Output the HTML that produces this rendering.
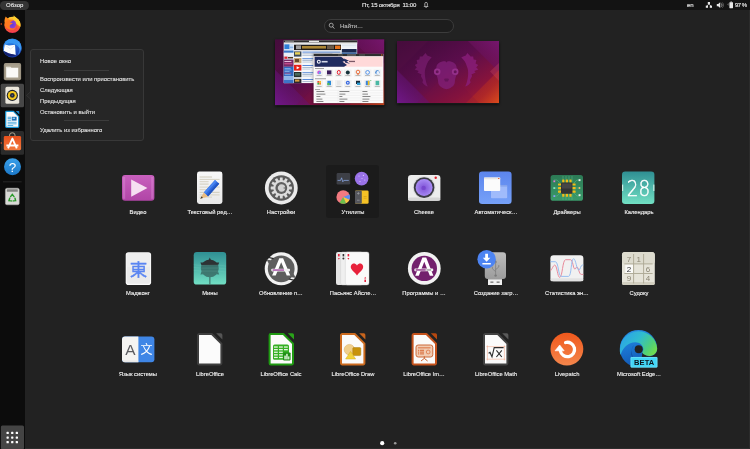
<!DOCTYPE html>
<html lang="ru">
<head>
<meta charset="utf-8">
<title>Обзор</title>
<style>
html,body{margin:0;padding:0;}
body{width:750px;height:449px;overflow:hidden;background:#222222;position:relative;font-family:"Liberation Sans","DejaVu Sans",sans-serif;color:#e6e6e6;}
.abs{position:absolute;}
.t,.mi,.lbl,.ph{will-change:transform;}
#topbar{position:absolute;left:0;top:0;width:750px;height:10px;background:#131313;}
#topbar .t{position:absolute;top:0;height:10px;line-height:10px;font-size:6px;color:#e2e2e2;white-space:nowrap;-webkit-text-stroke:0.15px #e2e2e2;}
#obzor{position:absolute;left:0;top:1px;width:29px;height:8.5px;border-radius:5px;background:#353535;}
#dock{position:absolute;left:0;top:10px;width:25px;height:439px;background:#0c0c0c;}
#search{position:absolute;left:323.8px;top:19.2px;width:128.6px;height:11.8px;border:0.8px solid #3c3c3c;border-radius:7px;background:#1d1d1d;}
#search .ph{position:absolute;left:15px;top:0;height:12px;line-height:12.2px;font-size:6px;color:#c2c2c2;-webkit-text-stroke:0.08px #c2c2c2;}
#menu{position:absolute;left:30px;top:49px;width:112.4px;height:90.2px;border:0.8px solid #383838;border-radius:3px;background:#262626;}
#menu .mi{position:absolute;left:9px;font-size:5.85px;line-height:8px;height:8px;color:#e8e8e8;white-space:nowrap;-webkit-text-stroke:0.08px #e8e8e8;}
#menu .sep{position:absolute;left:33.2px;width:45px;height:0.8px;background:#3c3c3c;}
.lbl{z-index:5;position:absolute;width:70px;text-align:center;font-size:5.78px;line-height:8px;height:8px;color:#f4f4f4;white-space:nowrap;-webkit-text-stroke:0.12px #f4f4f4;}
svg{position:absolute;overflow:visible;}
</style>
</head>
<body>

<!-- ===== top bar ===== -->
<div id="topbar">
  <div id="obzor"></div>
  <div class="t" style="left:6px;">Обзор</div>
  <div class="t" style="left:361.5px;letter-spacing:-0.18px;">Пт, 15 октября&nbsp; 11:00</div>
  <div class="t" style="left:686.6px;">en</div>
  <div class="t" style="left:735.4px;letter-spacing:-0.5px;">97 %</div>
</div>

<!-- ===== dock ===== -->
<div id="dock"></div>




<div style="position:absolute;left:25px;top:447.5px;width:725px;height:1.5px;background:#2d2d2d;"></div>
<div style="position:absolute;left:749px;top:10px;width:1px;height:439px;background:#2b2b2b;"></div>

<!-- ===== search ===== -->
<div id="search"><div class="ph">Найти…</div></div>

<!-- ===== context menu ===== -->
<div id="menu">
  <div class="mi" style="top:7.1px;">Новое окно</div>
  <div class="sep" style="top:19.5px;"></div>
  <div class="mi" style="top:24.9px;">Воспроизвести или приостановить</div>
  <div class="mi" style="top:36.1px;">Следующая</div>
  <div class="mi" style="top:47.1px;">Предыдущая</div>
  <div class="mi" style="top:58.3px;">Остановить и выйти</div>
  <div class="sep" style="top:70.3px;"></div>
  <div class="mi" style="top:76.1px;">Удалить из избранного</div>
</div>

<!-- ===== labels ===== -->
<div class="lbl" style="left:103px;top:208px;">Видео</div>
<div class="lbl" style="left:174.5px;top:208px;">Текстовый ред…</div>
<div class="lbl" style="left:246px;top:208px;">Настройки</div>
<div class="lbl" style="left:317.5px;top:208px;">Утилиты</div>
<div class="lbl" style="left:389px;top:208px;">Cheese</div>
<div class="lbl" style="left:460.5px;top:208px;">Автоматическ…</div>
<div class="lbl" style="left:532px;top:208px;">Драйверы</div>
<div class="lbl" style="left:603.5px;top:208px;">Календарь</div>

<div class="lbl" style="left:103px;top:289px;">Маджонг</div>
<div class="lbl" style="left:174.5px;top:289px;">Мины</div>
<div class="lbl" style="left:246px;top:289px;">Обновление п…</div>
<div class="lbl" style="left:317.5px;top:289px;">Пасьянс Айсле…</div>
<div class="lbl" style="left:389px;top:289px;">Программы и …</div>
<div class="lbl" style="left:460.5px;top:289px;">Создание загр…</div>
<div class="lbl" style="left:532px;top:289px;">Статистика эн…</div>
<div class="lbl" style="left:603.5px;top:289px;">Судоку</div>

<div class="lbl" style="left:103px;top:369.5px;">Язык системы</div>
<div class="lbl" style="left:174.5px;top:369.5px;">LibreOffice</div>
<div class="lbl" style="left:246px;top:369.5px;">LibreOffice Calc</div>
<div class="lbl" style="left:317.5px;top:369.5px;">LibreOffice Draw</div>
<div class="lbl" style="left:389px;top:369.5px;">LibreOffice Im…</div>
<div class="lbl" style="left:460.5px;top:369.5px;">LibreOffice Math</div>
<div class="lbl" style="left:532px;top:369.5px;">Livepatch</div>
<div class="lbl" style="left:603.5px;top:369.5px;">Microsoft Edge…</div>



<!-- ===== workspace thumbnails ===== -->
<svg id="thumbs" width="750" height="449" viewBox="0 0 750 449" style="left:0;top:0;">
  <defs>
    <linearGradient id="gWall" x1="0" y1="0" x2="1" y2="1"><stop offset="0" stop-color="#3c0a37"/><stop offset="0.45" stop-color="#5a0d4b"/><stop offset="0.75" stop-color="#86133c"/><stop offset="1" stop-color="#b4222a"/></linearGradient>
    <linearGradient id="gBL" x1="0" y1="1" x2="1" y2="0"><stop offset="0" stop-color="#70188a"/><stop offset="0.4" stop-color="#621472" stop-opacity="0.7"/><stop offset="1" stop-color="#5a1068" stop-opacity="0"/></linearGradient>
    <linearGradient id="gBR" x1="1" y1="1" x2="0" y2="0"><stop offset="0" stop-color="#dc4c1c"/><stop offset="0.35" stop-color="#b42c24" stop-opacity="0.75"/><stop offset="1" stop-color="#a82028" stop-opacity="0"/></linearGradient>
    <linearGradient id="gTR" x1="1" y1="0" x2="0" y2="1"><stop offset="0" stop-color="#76166e"/><stop offset="0.5" stop-color="#6a125c" stop-opacity="0.65"/><stop offset="1" stop-color="#70145f" stop-opacity="0"/></linearGradient>
    <g id="wp">
      <rect x="0" y="0" width="102" height="62" fill="url(#gWall)"/>
      <path d="M0 0 H31 L0 31 Z" fill="#551246" opacity="0.35"/>
      <path d="M0 29 L33 62 H0 Z" fill="url(#gBL)"/>
      <path d="M71 0 H102 V31 Z" fill="url(#gTR)"/>
      <path d="M102 29 V62 H69 Z" fill="url(#gBR)"/>
      <path d="M102 22 L93 30.500 L102 40 Z" fill="#d0506a" opacity="0.300"/>
      <path d="M20 62 L51 31 L82 62 Z" fill="#7a1244" opacity="0.180"/>
    </g>
    <filter id="sh" x="-10%" y="-10%" width="120%" height="125%"><feGaussianBlur stdDeviation="1.6"/></filter>
    <clipPath id="c1"><rect x="275" y="39" width="109.400" height="66"/></clipPath>
    <clipPath id="c2"><rect x="397" y="41" width="102" height="62"/></clipPath>
  </defs>
  <!-- shadows -->
  <rect x="275" y="40.500" width="109.400" height="66" fill="#0c0c0c" opacity="0.75" filter="url(#sh)"/>
  <rect x="397" y="42.500" width="102" height="62" fill="#0c0c0c" opacity="0.75" filter="url(#sh)"/>

  <!-- workspace 1 -->
  <g clip-path="url(#c1)">
    <use href="#wp" transform="translate(275 39) scale(1.0725 1.0645)"/>
    <rect x="275" y="39" width="109.400" height="0.500" fill="#1a1a1a" opacity="0.600"/>
    <!-- browser window -->
    <rect x="283.800" y="40.300" width="73.400" height="42.800" fill="#f6f8fb"/>
    <rect x="283.800" y="40.300" width="73.400" height="2.300" fill="#2b2b2b"/>
    <rect x="285" y="40.700" width="9" height="1.300" fill="#7a7a7a"/><rect x="309" y="40.700" width="10" height="1.300" fill="#e8e8e8"/>
    <rect x="283.800" y="42.600" width="73.400" height="1.300" fill="#e6e6e6"/>
    <rect x="283.800" y="43.900" width="9.700" height="39.200" fill="#cfe0f4"/>
    <rect x="284.400" y="44.400" width="5" height="4.600" fill="#2f7fd8"/><rect x="289.600" y="46.600" width="3.600" height="1.600" fill="#8ab4e6"/>
    <rect x="283.800" y="50.600" width="9.700" height="2" fill="#3b78c8"/>
    <rect x="283.800" y="53" width="9.700" height="3.400" fill="#e9eef6"/>
    <rect x="284.400" y="56.600" width="3" height="2.200" fill="#e0242c"/><rect x="288" y="57" width="5" height="1.400" fill="#55381c"/>
    <rect x="283.800" y="59.600" width="9.700" height="7.200" fill="#7a2a66"/>
    <rect x="284.400" y="61" width="7" height="1" fill="#e6b8da"/><rect x="284.400" y="63" width="8" height="1.400" fill="#c24a8a"/>
    <rect x="283.800" y="66.800" width="9.700" height="9.400" fill="#2f68c0"/>
    <rect x="284.600" y="68" width="6" height="0.700" fill="#9cc0f0"/><rect x="284.600" y="69.600" width="7" height="0.700" fill="#9cc0f0"/><rect x="284.600" y="71.200" width="5" height="0.700" fill="#9cc0f0"/><rect x="284.600" y="72.800" width="6.600" height="0.700" fill="#d05a80"/><rect x="284.600" y="74.400" width="6" height="0.700" fill="#9cc0f0"/>
    <rect x="283.800" y="76.200" width="9.700" height="3.800" fill="#8fb6e8"/><rect x="283.800" y="80" width="9.700" height="3.100" fill="#3d74c8"/>
    <rect x="294" y="44.700" width="47" height="5.400" fill="#1d1a18"/>
    <rect x="296" y="45.400" width="5" height="3.800" fill="#d8d8d8" opacity="0.7"/><rect x="302" y="46" width="24" height="2.600" fill="#c49a3a" opacity="0.85"/><rect x="327" y="45.400" width="7" height="3.800" fill="#6a5a48"/><rect x="335" y="45.600" width="5.400" height="3.400" fill="#e8741c"/>
    <rect x="341.800" y="44.400" width="14.800" height="2" fill="#dfe6f0"/><rect x="341.800" y="47" width="14.800" height="1.600" fill="#eef2f8"/><rect x="341.800" y="49" width="14.800" height="3.600" fill="#1c2a50"/>
    <rect x="341.800" y="52.600" width="14.800" height="1.400" fill="#3b78c8"/>
    <!-- rows -->
    <rect x="294" y="51.400" width="7.400" height="5.200" fill="#3a4a5a"/><rect x="295" y="52.200" width="5" height="2.400" fill="#e8d25a"/>
    <rect x="302.400" y="51.600" width="38" height="1" fill="#5a8ad8"/><rect x="302.400" y="53.400" width="30" height="0.900" fill="#a9b8cc"/><rect x="302.400" y="55" width="34" height="0.900" fill="#b9c6d8"/>
    <rect x="294" y="58" width="7.400" height="5.200" fill="#c8a878"/><rect x="295" y="59" width="4" height="3" fill="#6a4a2a"/>
    <rect x="302.400" y="58.200" width="11" height="1" fill="#5a8ad8"/><rect x="302.400" y="60" width="10" height="0.900" fill="#a9b8cc"/><rect x="302.400" y="61.600" width="9" height="0.900" fill="#b9c6d8"/>
    <rect x="294" y="64.800" width="7.400" height="5.800" fill="#e62117"/><path d="M296.600 66.200 l3 1.500 l-3 1.500 Z" fill="#ffffff"/>
    <rect x="302.400" y="65" width="11" height="1" fill="#5a8ad8"/><rect x="302.400" y="67" width="10" height="0.900" fill="#a9b8cc"/><rect x="302.400" y="68.600" width="8" height="0.900" fill="#b9c6d8"/>
    <rect x="294" y="72" width="7.400" height="5.200" fill="#26302e"/><rect x="295" y="73" width="5" height="2.600" fill="#4a6a5a"/>
    <rect x="302.400" y="72.200" width="11" height="1" fill="#5a8ad8"/><rect x="302.400" y="74" width="10" height="0.900" fill="#a9b8cc"/><rect x="302.400" y="75.600" width="9" height="0.900" fill="#b9c6d8"/>
    <rect x="294" y="78.800" width="7.400" height="4.300" fill="#2a2a30"/><rect x="295" y="79.600" width="4.400" height="2" fill="#d8a040"/>
    <rect x="302.400" y="79" width="11" height="1" fill="#5a8ad8"/><rect x="302.400" y="81" width="10" height="0.900" fill="#a9b8cc"/>

    <!-- software window -->
    <rect x="312.800" y="53.600" width="72" height="50.400" fill="#0c0c0c" opacity="0.350" filter="url(#sh)"/>
    <rect x="313.600" y="53.900" width="69.800" height="49.200" fill="#fbfbfb"/>
    <rect x="313.600" y="53.900" width="69.800" height="2.300" fill="#2e2e2e"/>
    <rect x="338" y="54.400" width="5" height="1.200" fill="#555555"/><rect x="347" y="54.400" width="9" height="1.200" fill="#777777"/><rect x="359" y="54.400" width="6" height="1.200" fill="#555555"/>
    <circle cx="381.800" cy="55" r="0.700" fill="#e8642c"/>
    <rect x="314.600" y="56.700" width="68" height="10" fill="#ffd9d9"/>
    <path d="M314.600 56.700 H341 L346 60.600 L342.500 61.800 L347 65 L344 66.700 H314.600 Z" fill="#1f2b5e"/>
    <circle cx="318.800" cy="61.700" r="2" fill="#f2f4fa"/><circle cx="318.800" cy="61.700" r="0.900" fill="#1f2b5e"/>
    <rect x="321.600" y="60.900" width="6" height="1.600" fill="#e8ecf6" opacity="0.9"/>
    <path d="M344 58.600 l5 2.200 l-2.600 0.600 l3.600 2.400 l-5 -1.200 Z" fill="#1f2b5e"/>
    <rect x="349" y="60.800" width="6" height="1.300" fill="#5a3a4a" opacity="0.8"/>
    <rect x="315" y="68.200" width="9" height="0.800" fill="#8a8a8a"/>
    <!-- icons row 1 -->
    <rect x="315.400" y="69.600" width="7.600" height="7.200" fill="#f1f1f1"/><circle cx="319.200" cy="72.400" r="1.900" fill="#c05ae0"/><circle cx="319.800" cy="73" r="1" fill="#4ac0e8"/>
    <rect x="325.400" y="69.600" width="7.600" height="7.200" fill="#f1f1f1"/><rect x="327" y="70.400" width="4.400" height="4" fill="#3a1c5a"/>
    <rect x="335" y="69.600" width="7.600" height="7.200" fill="#f1f1f1"/><ellipse cx="338.800" cy="72.400" rx="1.500" ry="2" fill="none" stroke="#e81c2c" stroke-width="1"/>
    <rect x="344" y="69.600" width="7.600" height="7.200" fill="#f1f1f1"/><circle cx="347.800" cy="72.400" r="2" fill="#16323a"/>
    <rect x="354.200" y="69.600" width="7.600" height="7.200" fill="#f1f1f1"/><circle cx="358" cy="72" r="1.800" fill="none" stroke="#e8642c" stroke-width="0.900"/><rect x="357.500" y="73.600" width="1" height="1.600" fill="#e8642c"/>
    <rect x="363.800" y="69.600" width="7.600" height="7.200" fill="#f1f1f1"/><circle cx="367.600" cy="72.400" r="1.900" fill="none" stroke="#3a84e8" stroke-width="0.800"/>
    <rect x="373.600" y="69.600" width="7.600" height="7.200" fill="#f1f1f1"/><circle cx="377.400" cy="72.400" r="2.100" fill="#2a78d0"/><path d="M376.400 72.400 a1.400 1.400 0 0 1 2.800 0 v2 h-2.800 Z" fill="#e8f0fa"/>
    <g fill="#9a9a9a"><rect x="316.600" y="75.400" width="5" height="0.600"/><rect x="326.600" y="75.400" width="5" height="0.600"/><rect x="336.200" y="75.400" width="5" height="0.600"/><rect x="345.200" y="75.400" width="5" height="0.600"/><rect x="355.400" y="75.400" width="5" height="0.600"/><rect x="365" y="75.400" width="5" height="0.600"/><rect x="374.800" y="75.400" width="5" height="0.600"/></g>
    <rect x="315" y="78.400" width="11" height="0.800" fill="#8a8a8a"/>
    <!-- icons row 2 -->
    <rect x="315.400" y="80" width="7.600" height="7.600" fill="#f1f1f1"/><rect x="317.400" y="81" width="1.800" height="1.800" fill="#e84a3a"/><rect x="319.200" y="81" width="1.800" height="1.800" fill="#f2c21c"/><rect x="317.400" y="82.800" width="1.800" height="1.800" fill="#3cb54a"/><rect x="319.200" y="82.800" width="1.800" height="1.800" fill="#f08a2c"/>
    <rect x="325.400" y="80" width="7.600" height="7.600" fill="#f1f1f1"/><rect x="327.400" y="80.800" width="3.600" height="4.400" fill="#2a8ad8"/><rect x="327.400" y="83" width="2" height="2.200" fill="#5ac04a"/>
    <rect x="335" y="80" width="7.600" height="7.600" fill="#f1f1f1"/><rect x="337" y="80.800" width="3.600" height="4.400" fill="#e6e6e6"/>
    <rect x="344" y="80" width="7.600" height="7.600" fill="#f1f1f1"/><circle cx="347.800" cy="82.800" r="2" fill="#3a6ae0"/><circle cx="347.800" cy="82.800" r="0.800" fill="#e8f0fa"/>
    <rect x="354.200" y="80" width="7.600" height="7.600" fill="#f1f1f1"/><rect x="356" y="80.800" width="4" height="3.200" fill="#1a2a3a"/><rect x="357" y="82.600" width="3.400" height="2.400" fill="#2a9ad0"/>
    <rect x="363.800" y="80" width="7.600" height="7.600" fill="#f1f1f1"/><rect x="365.800" y="80.800" width="3.600" height="4.400" fill="#3a84e0"/><rect x="367.800" y="80.800" width="1.600" height="4.400" fill="#f2c21c"/><rect x="370.400" y="80.200" width="0.800" height="0.800" fill="#3cb54a"/>
    <rect x="373.600" y="80" width="7.600" height="7.600" fill="#f1f1f1"/><rect x="375.600" y="80.800" width="3.600" height="4.400" fill="#4ab8a4"/>
    <g fill="#9a9a9a"><rect x="316.600" y="86" width="5" height="0.600"/><rect x="326.600" y="86" width="5" height="0.600"/><rect x="336.200" y="86" width="5" height="0.600"/><rect x="345.200" y="86" width="5" height="0.600"/><rect x="355.400" y="86" width="5" height="0.600"/><rect x="365" y="86" width="5" height="0.600"/><rect x="374.800" y="86" width="5" height="0.600"/></g>
    <rect x="315" y="89" width="5" height="0.700" fill="#8a8a8a"/>
    <g fill="none" stroke="#e2e2e2" stroke-width="0.400"><path d="M315 90.400 H383 M315 92.900 H383 M315 95.400 H383 M315 97.900 H383 M315 100.400 H383 M338 90.400 V102.800 M361 90.400 V102.800"/></g>
    <g fill="#6a6a6a"><rect x="316.400" y="91.200" width="8" height="0.800"/><rect x="339.400" y="91.200" width="10" height="0.800"/><rect x="362.400" y="91.200" width="5" height="0.800"/>
      <rect x="316.400" y="93.700" width="9" height="0.800"/><rect x="339.400" y="93.700" width="6" height="0.800"/><rect x="362.400" y="93.700" width="5.600" height="0.800"/>
      <rect x="316.400" y="96.200" width="4" height="0.800"/><rect x="339.400" y="96.200" width="3" height="0.800"/><rect x="362.400" y="96.200" width="8" height="0.800"/>
      <rect x="316.400" y="98.700" width="6" height="0.800"/><rect x="339.400" y="98.700" width="8" height="0.800"/><rect x="362.400" y="98.700" width="7" height="0.800"/>
      <rect x="316.400" y="101.200" width="7" height="0.800"/><rect x="339.400" y="101.200" width="5" height="0.800"/><rect x="362.400" y="101.200" width="6" height="0.800"/></g>
  </g>

  <!-- workspace 2 -->
  <g clip-path="url(#c2)">
    <use href="#wp" transform="translate(397 41)"/>
    <!-- lemur -->
    <g fill="#7e1e74" opacity="0.650">
      <path d="M425.600 53 L427.200 55.400 L431.700 57.200 C429 60 426.800 63 426.200 66.300 C425 69 424.600 72 424.900 74.900 C425.200 79 426.200 83 427.800 86.600 C425.600 85.600 423.600 84.400 422.400 82.400 L423 80 L420.800 76 L421.600 74.400 L417.400 72.600 L418.800 71 L414.600 69.500 L416.800 67.600 L414.800 65 L417.400 63.600 L416.600 60 L419.400 59.600 L419.800 56.400 L422.400 56.600 Z"/>
    </g>
    <g fill="#8a1e7a" opacity="0.800">
      <path d="M467.400 53 L465.800 55.400 L461.300 57.200 C464 60 466.200 63 466.800 66.300 C468 69 468.400 72 468.100 74.900 C467.800 79 466.800 83 465.200 86.600 C467.400 85.600 469.400 84.400 470.600 82.400 L470 80 L472.200 76 L471.400 74.400 L475.600 72.600 L474.200 71 L478.400 69.500 L476.200 67.600 L478.200 65 L475.600 63.600 L476.400 60 L473.600 59.600 L473.200 56.400 L470.600 56.600 Z"/>
    </g>
    <g fill="#82207a" opacity="0.750">
      <path d="M446.500 62.400 L447.400 61.400 C452 61 456.700 63.500 456.700 68 C458.600 69.200 458.800 73.600 456.600 75 C455.600 77 455 79.500 454.800 82.400 C454.400 85.800 451 87.500 449.400 88.400 L446.500 89.300 L443.600 88.400 C442 87.500 438.600 85.800 438.200 82.400 C438 79.500 437.400 77 436.400 75 C434.200 73.600 434.400 69.200 436.300 68 C436.300 63.500 441 61 445.600 61.400 Z"/>
    </g>
    <g fill="#9a3490" opacity="0.850"><circle cx="437.200" cy="71.700" r="3.300"/><circle cx="455.200" cy="71.700" r="3.300"/></g>
    <g fill="#651458"><circle cx="437.200" cy="71.700" r="1.500"/><circle cx="455.200" cy="71.700" r="1.500"/><path d="M444 79 C445.500 78.400 447.500 78.400 449 79 L448 81.600 H445 Z"/></g>
  </g>
</svg>

<!-- ===== app grid icons ===== -->
<svg id="grid" width="750" height="449" viewBox="0 0 750 449" style="left:0;top:0;">
  <defs>
    <linearGradient id="gVid" x1="0" y1="0" x2="0" y2="1"><stop offset="0" stop-color="#c960be"/><stop offset="1" stop-color="#b045a6"/></linearGradient>
    <linearGradient id="gTeal" x1="0" y1="0" x2="0" y2="1"><stop offset="0" stop-color="#2f8f93"/><stop offset="1" stop-color="#72e0c4"/></linearGradient>
    <linearGradient id="gBlue" x1="0" y1="0" x2="0" y2="1"><stop offset="0" stop-color="#5c85ed"/><stop offset="1" stop-color="#76a1f8"/></linearGradient>
    <linearGradient id="gGreen" x1="0" y1="0" x2="0" y2="1"><stop offset="0" stop-color="#2c7a55"/><stop offset="1" stop-color="#3a9a6a"/></linearGradient>
    <radialGradient id="gLens" cx="0.48" cy="0.52" r="0.5"><stop offset="0" stop-color="#8052d6"/><stop offset="0.55" stop-color="#9470e6"/><stop offset="1" stop-color="#a88af4"/></radialGradient>
    <linearGradient id="gOrange" x1="0" y1="0" x2="0" y2="1"><stop offset="0" stop-color="#f0581c"/><stop offset="1" stop-color="#f4864c"/></linearGradient>
    <linearGradient id="gUsb" x1="0" y1="0" x2="0" y2="1"><stop offset="0" stop-color="#bdbdbd"/><stop offset="1" stop-color="#9c9c9c"/></linearGradient>
    <linearGradient id="gEdge1" x1="0" y1="0.2" x2="1" y2="0.7"><stop offset="0" stop-color="#2aa0ea"/><stop offset="0.45" stop-color="#30bcd0"/><stop offset="0.8" stop-color="#4fd07a"/><stop offset="1" stop-color="#70dc50"/></linearGradient>
    <linearGradient id="gEdge2" x1="0" y1="0" x2="0.3" y2="1"><stop offset="0" stop-color="#2a92e4"/><stop offset="0.5" stop-color="#1b76d2"/><stop offset="1" stop-color="#1258b4"/></linearGradient>
    <linearGradient id="gPaper" x1="0" y1="0" x2="0" y2="1"><stop offset="0" stop-color="#f8f8f8"/><stop offset="1" stop-color="#e9e9e9"/></linearGradient>
  </defs>

  <!-- Видео -->
  <rect x="122" y="175" width="32.4" height="25.8" rx="3" fill="url(#gVid)"/>
  <rect x="123" y="177" width="2.200" height="21.800" fill="#dc8cd4" opacity="0.450"/>
  <rect x="151.200" y="177" width="2.200" height="21.800" fill="#dc8cd4" opacity="0.450"/>
  <path d="M131.2 179.4 L147.4 188 L131.2 196.8 Z" fill="#f6dff2"/>

  <!-- Текстовый редактор -->
  <rect x="197" y="171.600" width="25.400" height="32.400" rx="2.400" fill="url(#gPaper)"/>
  <g fill="#d6d2c4">
    <rect x="199.600" y="176.400" width="12.400" height="1.200"/><rect x="199.600" y="178.900" width="20" height="1"/><rect x="199.600" y="181.200" width="9" height="1"/>
    <rect x="199.600" y="183.500" width="9" height="1.200"/><rect x="199.600" y="186.600" width="20" height="1"/><rect x="199.600" y="189.200" width="8" height="1"/>
    <rect x="199.600" y="191.800" width="20" height="1.200"/><rect x="199.600" y="194.400" width="20" height="1"/><rect x="199.600" y="196.600" width="12.400" height="1"/>
  </g>
  <path d="M203.800 192.600 L215 180 L219.200 183.800 L208 196.400 Z" fill="#2f6be0"/>
  <path d="M215 180 L216.600 181.400 L205.400 194 L203.800 192.600 Z" fill="#4a86f0"/>
  <path d="M217.800 182.600 L219.200 183.800 L208 196.400 L206.600 195.200 Z" fill="#2456c0"/>
  <path d="M203.800 192.600 L208 196.400 L200.200 198.800 Z" fill="#ecbc7e"/>
  <path d="M201.800 196.200 L202.800 198 L200.200 198.800 Z" fill="#333333"/>

  <!-- Настройки -->
  <circle cx="281.300" cy="188" r="16.400" fill="#ebebeb"/>
  <circle cx="281.300" cy="188" r="12.700" fill="#5b5b5b"/>
  <g fill="#dcdcdc">
    <circle cx="281.300" cy="188" r="8"/>
    <rect x="279.900" y="177.400" width="2.800" height="21.200" rx="0.400" transform="rotate(0 281.300 188)"/><rect x="279.900" y="177.400" width="2.800" height="21.200" rx="0.400" transform="rotate(30 281.300 188)"/><rect x="279.900" y="177.400" width="2.800" height="21.200" rx="0.400" transform="rotate(60 281.300 188)"/><rect x="279.900" y="177.400" width="2.800" height="21.200" rx="0.400" transform="rotate(90 281.300 188)"/><rect x="279.900" y="177.400" width="2.800" height="21.200" rx="0.400" transform="rotate(120 281.300 188)"/><rect x="279.900" y="177.400" width="2.800" height="21.200" rx="0.400" transform="rotate(150 281.300 188)"/>
  </g>
  <circle cx="281.300" cy="188" r="5.900" fill="#606060"/>
  <circle cx="281.500" cy="188" r="3.700" fill="#d2d2d2"/>
  <path d="M279 184.600 L277.600 186.200 M279 191.400 L277.600 189.800 M285.400 188 L283.600 188" stroke="#606060" stroke-width="1.200"/>

  <!-- Утилиты -->
  <rect x="326" y="165" width="53" height="53" rx="3" fill="#1b1b1b"/>
  <rect x="336.6" y="173" width="13.6" height="11.6" rx="1.4" fill="#3d3f46"/>
  <path d="M337.6 180.4 h3 l1 -2.6 l1.2 4 l1 -1.4 h5" fill="none" stroke="#8fb0f0" stroke-width="0.7"/>
  <circle cx="361.6" cy="178.6" r="6.8" fill="#9a72e8"/>
  <g fill="#d8c8ff"><circle cx="359" cy="176" r="0.6"/><circle cx="363.4" cy="175.4" r="0.6"/><circle cx="364.8" cy="180" r="0.6"/><circle cx="360" cy="181.6" r="0.6"/><circle cx="362" cy="178.6" r="0.5"/></g>
  <circle cx="343.2" cy="197" r="6.8" fill="#f27a80"/>
  <path d="M343.2 197 L349.6 194.6 A6.8 6.8 0 0 1 349.4 199.8 Z" fill="#5b8def"/>
  <path d="M343.2 197 L349.4 199.8 A6.8 6.8 0 0 1 346 203.2 Z" fill="#f6c944"/>
  <path d="M343.2 197 L346 203.2 A6.8 6.8 0 0 1 339.6 202.8 Z" fill="#6cc04a"/>
  <rect x="355" y="190.4" width="13.6" height="13.4" rx="1.4" fill="#f5c226"/>
  <rect x="355" y="190.4" width="6.8" height="13.4" rx="1.4" fill="#55565c"/>
  <g fill="#9a9ba2"><rect x="357" y="193" width="2.6" height="0.7"/><rect x="357.95" y="192.05" width="0.7" height="2.6"/><rect x="357" y="199.8" width="2.6" height="0.7"/></g>
  <g fill="#d99f10"><rect x="363.6" y="196.2" width="3" height="0.7"/><rect x="363.6" y="197.8" width="3" height="0.7"/></g>

  <!-- Cheese -->
  <rect x="408" y="175" width="32.4" height="25.8" rx="3.2" fill="#ededed"/>
  <rect x="408" y="197.5" width="32.4" height="3.3" rx="1.6" fill="#d6d6d6"/>
  <circle cx="424.100" cy="187.600" r="11.300" fill="#dcdcdc"/>
  <circle cx="424.100" cy="187.600" r="10.300" fill="#3a3a44"/>
  <circle cx="424.100" cy="187.600" r="8.500" fill="url(#gLens)"/>
  <circle cx="423.600" cy="187.900" r="2.200" fill="#7444cc" opacity="0.800"/>
  <circle cx="435.700" cy="177.700" r="1.200" fill="#e0202a"/>

  <!-- Автозапуск -->
  <rect x="479" y="171.6" width="32.6" height="32.4" rx="3.2" fill="url(#gBlue)"/>
  <rect x="491" y="185" width="16.2" height="13.2" rx="0.8" fill="#a9c1fb" opacity="0.85"/>
  <rect x="491" y="185" width="16.2" height="1.6" fill="#7f9fe8" opacity="0.8"/>
  <rect x="484" y="177.6" width="16.2" height="13.4" rx="0.8" fill="#fbfbfb"/>
  <rect x="484" y="177.6" width="16.2" height="1.7" fill="#e9e6e4"/>
  <rect x="498" y="178" width="1.4" height="1" fill="#e8603a"/>

  <!-- Драйверы -->
  <rect x="550.6" y="175" width="32.4" height="25.8" rx="2.6" fill="url(#gGreen)"/>
  <g stroke="#5fc08c" stroke-width="0.6" fill="none" opacity="0.8">
    <path d="M563 176 v6 M566 176 v6 M569 176 v6 M572 176 v6 M563 194 v6 M566 194 v6 M569 194 v6 M572 194 v6"/>
    <path d="M554 180 h3 l3 3 M554 196 h3 l3 -3 M580 180 h-3 l-3 3 M580 196 h-3 l-3 -3 M553 188 h7 M574 188 h7"/>
  </g>
  <g fill="#f2bc18">
    <rect x="562.200" y="179.400" width="2.200" height="3.400" rx="0.500"/><rect x="565.800" y="179.400" width="2.200" height="3.400" rx="0.500"/><rect x="569.400" y="179.400" width="2.200" height="3.400" rx="0.500"/>
    <rect x="562.200" y="193.400" width="2.200" height="3.400" rx="0.500"/><rect x="565.800" y="193.400" width="2.200" height="3.400" rx="0.500"/><rect x="569.400" y="193.400" width="2.200" height="3.400" rx="0.500"/>
    <rect x="558" y="183.400" width="3.400" height="2.200" rx="0.500"/><rect x="558" y="187" width="3.400" height="2.200" rx="0.500"/><rect x="558" y="190.600" width="3.400" height="2.200" rx="0.500"/>
    <rect x="572.200" y="183.400" width="3.400" height="2.200" rx="0.500"/><rect x="572.200" y="187" width="3.400" height="2.200" rx="0.500"/><rect x="572.200" y="190.600" width="3.400" height="2.200" rx="0.500"/>
  </g>
  <rect x="561" y="182.600" width="11.400" height="11.200" rx="1" fill="#343434"/>
  <rect x="561.800" y="183.400" width="9.800" height="5" rx="0.600" fill="#464646"/>
  <rect x="553.400" y="180.400" width="1.800" height="1.800" fill="#e07ad0"/><rect x="553.400" y="195.200" width="1.800" height="1.800" fill="#8a9cf4"/><rect x="553.400" y="187.200" width="1.800" height="1.800" fill="#8ae8c0"/>
  <rect x="578.600" y="179.200" width="1.900" height="1.900" fill="#f2f2f2"/><rect x="578.600" y="194.200" width="1.900" height="1.900" fill="#f2f2f2"/><circle cx="579.400" cy="188" r="0.900" fill="#f0c078"/>

  <!-- Календарь -->
  <rect x="622" y="171.6" width="32.4" height="32.4" rx="3.2" fill="url(#gTeal)"/>
  <rect x="622" y="184.6" width="1.2" height="6.4" fill="#c8ece4"/><rect x="653.2" y="184.6" width="1.2" height="6.4" fill="#c8ece4"/>
  <text transform="translate(638.400 195.900) scale(0.860 1)" x="0" y="0" font-family="DejaVu Sans Light, DejaVu Sans, Liberation Sans, sans-serif" font-weight="200" font-size="21.500" fill="#ffffff" stroke="#ffffff" stroke-width="0.400" text-anchor="middle">28</text>

  <!-- Маджонг -->
  <rect x="125.700" y="252.300" width="25.400" height="32.800" rx="2.800" fill="#fafafa"/>
  <rect x="126.700" y="253.300" width="23.400" height="30.400" rx="2" fill="#ebebeb"/>
  <rect x="126.700" y="253.300" width="23.400" height="14" rx="2" fill="#efefef"/>
  <text x="138.400" y="275.700" font-family="Liberation Sans, Noto Sans CJK JP, sans-serif" font-size="17.500" fill="#5b86f2" stroke="#5b86f2" stroke-width="0.300" text-anchor="middle">東</text>

  <!-- Мины -->
  <rect x="193.700" y="252.100" width="32.500" height="32.500" rx="3.200" fill="url(#gTeal)"/>
  <clipPath id="cmA"><rect x="193" y="252" width="34" height="13.600"/></clipPath>
  <clipPath id="cmB"><rect x="193" y="265.600" width="34" height="19"/></clipPath>
  <g clip-path="url(#cmA)" fill="#2d3234">
    <circle cx="209.800" cy="268.400" r="8.900"/>
    <path d="M208.600 260.200 L209.800 257.600 L211 260.200 Z"/>
    <path d="M203.400 262.600 L200.400 262.400 L201.600 265.400 Z"/>
    <path d="M216.200 262.600 L219.200 262.400 L218 265.400 Z"/>
  </g>
  <g clip-path="url(#cmB)" fill="#2c4a48" opacity="0.620">
    <circle cx="209.800" cy="268.400" r="8.900"/>
    <path d="M203.400 274.200 L200.400 274.600 L201.600 271.400 Z"/>
    <path d="M216.200 274.200 L219.200 274.600 L218 271.400 Z"/>
    <rect x="209.200" y="276.800" width="1.300" height="7.800"/>
  </g>
  <g stroke="#8adccc" stroke-width="0.500" opacity="0.300" fill="none"><path d="M193.700 264.600 C203 266.600 216 263.600 226.200 266.200 M193.700 267.400 C204 269.400 216 266.600 226.200 269 M193.700 270.400 C204 272 216 270 226.200 272"/></g>

  <!-- Обновление приложений -->
  <circle cx="281.200" cy="268.800" r="16.500" fill="#f2f2f2"/>
  <circle cx="281.200" cy="268.800" r="13.400" fill="#5e5e5e"/>
  <path d="M266.500 259.500 L272 260.600 L269.400 264.800 Z M295.900 278.100 L290.400 277 L293 272.800 Z" fill="#5e5e5e"/>
  <path d="M267.800 257.200 L273.600 258.600" stroke="#222222" stroke-width="1.100"/><path d="M294.600 280.400 L288.800 279" stroke="#222222" stroke-width="1.100"/>
  <path d="M272.100 275.500 L279.300 258.200 H283.100 L290.300 275.500 H286.700 L281.200 262.300 L275.700 275.500 Z" fill="#ffffff"/>
  <rect x="271.300" y="268.700" width="18.700" height="2.700" rx="0.800" fill="#f2f2f2"/>
  <rect x="272.600" y="269.400" width="11.400" height="1.300" fill="#a040a0"/>

  <!-- Пасьянс Айслериот -->
  <rect x="336" y="252" width="22" height="33" rx="2" fill="#e6e6e6"/>
  <rect x="340.6" y="252" width="22" height="33" rx="2" fill="#efefef" stroke="#c9c9c9" stroke-width="0.4"/>
  <rect x="345.4" y="252" width="23.6" height="33" rx="2" fill="#fafafa" stroke="#c9c9c9" stroke-width="0.4"/>
  <path d="M357 265.400 c-2.800 -4.200 -8 -0.800 -5.600 3.600 c1.400 2.600 4.200 4.200 5.600 6.400 c1.400 -2.200 4.200 -3.800 5.600 -6.400 c2.400 -4.400 -2.800 -7.800 -5.600 -3.600 Z" fill="#e8223c"/>
  <g fill="#e8223c"><rect x="338" y="254" width="1.6" height="2.4"/><path d="M338 258 h1.8 l-0.9 1.8 Z"/><rect x="347.6" y="254" width="1.6" height="2.4"/><path d="M347.4 258 h2 l-1 1.8 Z"/><path d="M364.2 278.6 h2 l-1 -1.8 Z"/><rect x="364.4" y="279.6" width="1.6" height="2.4"/></g>
  <g fill="#333"><rect x="342.6" y="254" width="1.6" height="2.4"/><circle cx="343.4" cy="258.6" r="1"/></g>

  <!-- Программы и обновления -->
  <circle cx="424.300" cy="268.400" r="16.400" fill="#f2f2f2"/>
  <circle cx="424.300" cy="268.400" r="12.700" fill="#73206d"/>
  <path d="M415.200 275.800 L422.400 257.600 H426.200 L433.400 275.800 H429.800 L424.300 261.800 L418.800 275.800 Z" fill="#ffffff"/>
  <rect x="414.400" y="268.600" width="18.800" height="2.700" rx="0.800" fill="#f2f2f2"/>
  <rect x="415.700" y="269.300" width="10" height="1.300" fill="#8a2a84"/>
  <rect x="426.400" y="269.300" width="4.600" height="1.300" fill="#9a9a9a"/>

  <!-- Создание загрузочного диска -->
  <rect x="484.800" y="252.300" width="21.200" height="26.800" rx="3" fill="url(#gUsb)"/>
  <rect x="488" y="279.2" width="14" height="5.8" fill="#f0f0f0"/>
  <rect x="490.4" y="281.4" width="3" height="1.6" fill="#8a8a8a"/><rect x="496.6" y="281.4" width="3" height="1.6" fill="#8a8a8a"/>
  <g stroke="#7a7a7a" stroke-width="0.7" fill="none"><path d="M495.6 275 V261.6 M495.6 271.6 L492.4 268.8 V266.8 M495.6 269.6 L498.8 267 V265"/></g>
  <circle cx="495.6" cy="275.6" r="1.2" fill="#7a7a7a"/><path d="M494.2 262.4 L495.6 259.8 L497 262.4 Z" fill="#7a7a7a"/>
  <circle cx="486.6" cy="259.2" r="9.2" fill="#4d84f2"/>
  <path d="M485.2 253.8 h2.8 v4 h2.4 l-3.8 4 l-3.8 -4 h2.4 Z" fill="#ffffff"/>
  <rect x="482.4" y="263" width="8.4" height="1.5" fill="#ffffff"/>

  <!-- Статистика энергопотребления -->
  <rect x="550.400" y="255.300" width="33" height="26" rx="3.200" fill="#f1f1f1"/>
  <rect x="550.400" y="278.200" width="33" height="3.100" rx="1.500" fill="#e2e2e2"/>
  <clipPath id="cps"><rect x="550.400" y="255.300" width="33" height="26" rx="3.200"/></clipPath>
  <g clip-path="url(#cps)" fill="none" stroke-width="0.950" stroke-linecap="round">
    <path d="M550.400 271 C552 270 553 265.100 554.800 265.100 C557 265.100 557.500 277.400 559.700 277.400 C562.500 277.400 562.500 259.700 565.600 259.700 L570.500 259.700 C573 259.700 573 269 574.900 269 C575.800 269 576 267 576.900 267 C578.600 267 579 274.400 581.300 274.400 L583.400 274.400" stroke="#e88496"/>
    <path d="M550.400 261.700 L555.300 261.700 C558.600 261.700 558.200 276.400 561.200 276.400 L568.500 276.400 C571.600 276.400 571 258.700 573.400 258.700 C576 258.700 576.400 270 578.800 270 C580.400 270 580.600 265.100 582.300 265.100 L583.400 265" stroke="#92bcf0"/>
  </g>

  <!-- Судоку -->
  <rect x="622" y="252.100" width="32.800" height="33" rx="3.200" fill="#e6e4d9"/>
  <rect x="622" y="252.100" width="32.800" height="12" rx="3.200" fill="#dddbce"/>
  <rect x="622" y="282" width="32.800" height="3.100" rx="1.500" fill="#d2cfc0"/>
  <rect x="625.300" y="264.400" width="7.800" height="8.700" fill="#fbfbf8"/>
  <g stroke="#aeaa96" stroke-width="0.950"><path d="M633.600 254 V283.400 M643.600 254 V283.400 M624.400 263.900 H652.600 M624.400 273.500 H652.600"/></g>
  <g font-family="Liberation Sans, sans-serif" font-size="8" fill="#8a8472" text-anchor="middle">
    <text x="629.100" y="262">7</text><text x="638.700" y="262">1</text><text x="648" y="271.800">6</text><text x="629.100" y="280.800">9</text><text x="648" y="280.800">4</text>
    <text x="629.100" y="271.800" fill="#333338">2</text>
  </g>

  <!-- Язык системы -->
  <rect x="122" y="336.400" width="32.400" height="25.800" rx="3" fill="#3f86e6"/>
  <path d="M125 336.400 h13.400 v25.800 h-13.400 a3 3 0 0 1 -3 -3 v-19.800 a3 3 0 0 1 3 -3 Z" fill="#f5f4f2"/>
  <rect x="123" y="360.400" width="15.400" height="1.800" fill="#dcdcdc" opacity="0.500"/>
  <text x="130.300" y="354.900" font-family="Liberation Sans, sans-serif" font-size="15.400" fill="#5c5c60" text-anchor="middle">A</text>
  <text x="146.400" y="353.600" font-family="Liberation Sans, Noto Sans CJK SC, sans-serif" font-size="12" fill="#ffffff" text-anchor="middle">文</text>

  <!-- LibreOffice -->
  <path d="M199.20 334.00 H211.80 L221.40 343.60 V363.20 a1.2 1.2 0 0 1 -1.2 1.2 H199.20 a1.2 1.2 0 0 1 -1.2 -1.2 V335.20 a1.2 1.2 0 0 1 1.2 -1.2 Z" fill="#fbfbfb" stroke="#3e3e3e" stroke-width="2.0" stroke-linejoin="round"/>
  <path d="M216.20 333.30 H220.80 a1.6 1.6 0 0 1 1.6 1.6 V339.50 Z" fill="#555555"/>

  <!-- LibreOffice Calc -->
  <path d="M270.80 334.00 H283.40 L293.00 343.60 V363.20 a1.2 1.2 0 0 1 -1.2 1.2 H270.80 a1.2 1.2 0 0 1 -1.2 -1.2 V335.20 a1.2 1.2 0 0 1 1.2 -1.2 Z" fill="#fbfbfb" stroke="#1f9a12" stroke-width="2.0" stroke-linejoin="round"/>
  <path d="M287.80 333.30 H292.40 a1.6 1.6 0 0 1 1.6 1.6 V339.50 Z" fill="#2aa31a"/>
  <rect x="273" y="344.600" width="16" height="15.200" rx="1.600" fill="#35b024"/>
  <g fill="#e6f6e2">
    <rect x="274" y="346.400" width="3.800" height="1.300"/><rect x="279" y="346.400" width="3.800" height="1.300"/><rect x="284" y="346.400" width="3.800" height="1.300"/>
    <rect x="274" y="349" width="3.800" height="1.300"/><rect x="279" y="349" width="3.800" height="1.300"/><rect x="284" y="349" width="3.800" height="1.300"/>
    <rect x="274" y="351.600" width="3.800" height="1.300"/><rect x="279" y="351.600" width="3.800" height="1.300"/>
    <rect x="274" y="354.200" width="3.800" height="1.300"/><rect x="279" y="354.200" width="3.800" height="1.300"/>
    <rect x="274" y="356.800" width="3.800" height="1.300"/><rect x="279" y="356.800" width="3.800" height="1.300"/>
  </g>
  <rect x="283" y="352.400" width="7.600" height="8" rx="0.800" fill="#1f8f14"/>
  <rect x="284.300" y="355.600" width="1.500" height="3.800" fill="#dff3da"/><rect x="286.200" y="353.800" width="1.500" height="5.600" fill="#dff3da"/><rect x="288.100" y="356.400" width="1.300" height="3" fill="#dff3da"/>

  <!-- LibreOffice Draw -->
  <path d="M342.20 334.00 H354.80 L364.40 343.60 V363.20 a1.2 1.2 0 0 1 -1.2 1.2 H342.20 a1.2 1.2 0 0 1 -1.2 -1.2 V335.20 a1.2 1.2 0 0 1 1.2 -1.2 Z" fill="#fbfbfb" stroke="#cc6a1e" stroke-width="2.0" stroke-linejoin="round"/>
  <path d="M359.20 333.30 H363.80 a1.6 1.6 0 0 1 1.6 1.6 V339.50 Z" fill="#c8641c"/>
  <circle cx="349.400" cy="349.600" r="5.200" fill="#f0cf8c" stroke="#d9a85a" stroke-width="0.500"/>
  <rect x="352.800" y="347.600" width="8" height="8" rx="1" fill="#c8930c" stroke="#a8780a" stroke-width="0.500"/>
  <path d="M345.600 359 L350.600 351.400 L355.600 359 Z" fill="#f2d23c" stroke="#d4ae1c" stroke-width="0.500" stroke-linejoin="round"/>

  <!-- LibreOffice Impress -->
  <path d="M413.80 334.00 H426.40 L436.00 343.60 V363.20 a1.2 1.2 0 0 1 -1.2 1.2 H413.80 a1.2 1.2 0 0 1 -1.2 -1.2 V335.20 a1.2 1.2 0 0 1 1.2 -1.2 Z" fill="#fbfbfb" stroke="#c4521c" stroke-width="2.0" stroke-linejoin="round"/>
  <path d="M430.80 333.30 H435.40 a1.6 1.6 0 0 1 1.6 1.6 V339.50 Z" fill="#b8480f"/>
    <rect x="416" y="345" width="16.800" height="12" rx="2.200" fill="#f1cbb2" stroke="#cc6a3a" stroke-width="1"/>
  <g fill="#d86a38"><rect x="418" y="347.400" width="12.600" height="0.900"/><rect x="418" y="349.800" width="1.200" height="1"/><rect x="420" y="349.800" width="4" height="1"/><rect x="418" y="351.600" width="1.200" height="1"/><rect x="420" y="351.600" width="4" height="1"/><rect x="418" y="353.400" width="1.200" height="1"/><rect x="420" y="353.400" width="4" height="1"/></g>
  <circle cx="428.200" cy="352" r="1.900" fill="none" stroke="#d86a38" stroke-width="0.700"/>
  <path d="M424.300 356.400 v2 M421 361 l3.300 -2.600 l3.300 2.600" fill="none" stroke="#c4521c" stroke-width="0.900"/>

  <!-- LibreOffice Math -->
  <path d="M485.20 334.00 H497.80 L507.40 343.60 V363.20 a1.2 1.2 0 0 1 -1.2 1.2 H485.20 a1.2 1.2 0 0 1 -1.2 -1.2 V335.20 a1.2 1.2 0 0 1 1.2 -1.2 Z" fill="#fbfbfb" stroke="#424242" stroke-width="2.0" stroke-linejoin="round"/>
  <path d="M502.20 333.30 H506.80 a1.6 1.6 0 0 1 1.6 1.6 V339.50 Z" fill="#5a5a5a"/>
  <g stroke="#f0a080" stroke-width="0.500" fill="none"><path d="M487.400 345.400 V360.400 M504.400 345.400 V360.400 M486.400 346.600 H505.400 M486.400 359.200 H505.400"/></g>
  <path d="M488.600 353.200 l1.400 -0.800 l2 4.400 l2.200 -9.200 h9.400" fill="none" stroke="#2e2e2e" stroke-width="1.100"/>
  <path d="M496.400 350.400 l5.400 6.600 M501.800 350.400 l-5.400 6.600" fill="none" stroke="#2e2e2e" stroke-width="1.100"/>

  <!-- Livepatch -->
  <circle cx="566.900" cy="349.100" r="16.400" fill="url(#gOrange)"/>
  <path d="M565.600 342.500 A7.200 7.200 0 1 1 560.300 350.800" fill="none" stroke="#ffffff" stroke-width="3.300" stroke-linecap="round"/>
  <path d="M555 350.800 L564.200 350.800 L559.700 345 Z" fill="#ffffff" stroke="#ffffff" stroke-width="0.600" stroke-linejoin="round"/>

  <!-- Microsoft Edge Beta -->
  <circle cx="638.5" cy="348.6" r="18.7" fill="url(#gEdge2)"/>
  <path d="M634 345 C630 349 631 358 638 363 C633 360 628 354 634 345 Z" fill="#0c3f90" opacity="0.8"/>
  <path d="M642.5 352.500 C644 353.500 646 356.300 650 356.300 C654 356.300 657.500 352 657.400 348 L660 348 L660 368 L640 368 Z" fill="#222222"/>
  <path d="M619.850 350 A18.700 18.700 0 0 1 657.200 348.600 C657.200 353 653.500 356.200 649.500 356 C645 355.800 642.300 353.600 642.300 352.300 C642.300 351.400 643.600 350.800 643.300 348.400 C642.800 345 639.500 342.200 635.500 342.200 C628 342.200 622.500 348 620.600 355 C620 353.500 619.800 351.500 619.850 350 Z" fill="url(#gEdge1)"/>
  <circle cx="638.700" cy="349.200" r="4" fill="#222222"/>
  <rect x="630.600" y="357" width="26.800" height="10.600" rx="0.800" fill="#43d6f6"/>
  <rect x="631" y="357.400" width="26" height="9.800" rx="0.600" fill="none" stroke="#8ae8fc" stroke-width="0.500"/>
  <text x="644.200" y="365" font-family="Liberation Sans, sans-serif" font-size="7.500" font-weight="bold" fill="#0c141c" text-anchor="middle" letter-spacing="0.100">BETA</text>
</svg>

<!-- ===== dock + chrome icons ===== -->
<svg id="chrome" width="750" height="449" viewBox="0 0 750 449" style="left:0;top:0;">
  <defs>
    <linearGradient id="gFx" x1="0" y1="0" x2="0" y2="1"><stop offset="0" stop-color="#ffd43a"/><stop offset="0.45" stop-color="#ff7a1a"/><stop offset="1" stop-color="#f0305a"/></linearGradient>
    <radialGradient id="gFxIn" cx="0.5" cy="0.5" r="0.5"><stop offset="0" stop-color="#5a3fd8"/><stop offset="1" stop-color="#9a3fd0"/></radialGradient>
    <linearGradient id="gTb" x1="0.2" y1="0" x2="0.7" y2="1"><stop offset="0" stop-color="#2b8ef0"/><stop offset="0.55" stop-color="#1f62d0"/><stop offset="1" stop-color="#17309a"/></linearGradient>
    <linearGradient id="gHelp" x1="0" y1="0" x2="0" y2="1"><stop offset="0" stop-color="#3aa0ea"/><stop offset="1" stop-color="#1c78c8"/></linearGradient>
    <linearGradient id="gSw" x1="0" y1="0" x2="0" y2="1"><stop offset="0" stop-color="#e8501c"/><stop offset="1" stop-color="#f27a3e"/></linearGradient>
  </defs>
  <!-- running / highlight backgrounds -->
  <rect x="0.7" y="83.8" width="23.3" height="23.4" rx="1.5" fill="#474747"/>
  <rect x="0.7" y="131" width="23.3" height="23.8" rx="1.5" fill="#2b2b2b"/>
  <!-- running dots -->
  <circle cx="1.3" cy="24" r="0.8" fill="#e95420"/>
  <circle cx="1.3" cy="143" r="0.8" fill="#e95420"/>

  <!-- firefox -->
  <circle cx="12.400" cy="24.900" r="8.100" fill="url(#gFx)"/>
  <path d="M13.900 15.200 C14.600 17 17.800 17.800 19.700 21.400 C20.500 23 20.800 25 20.400 27 L14.200 22 C13 20 12.700 18 13.900 15.200 Z" fill="#ffd02e"/>
  <path d="M4.500 22 C4.400 19.800 5 17.800 5.800 16.600 C6.600 17.800 7.800 18.500 9.400 18.900 L6 23.500 Z" fill="#ff8a1c"/>
  <circle cx="12" cy="24.300" r="4.200" fill="url(#gFxIn)"/>
  <path d="M6.200 21.600 C8.200 19.500 11.800 19.300 13.800 21 C12 20.900 10.500 21.500 9.900 22.700 C11.100 22.500 12.300 22.900 12.800 23.900 C11.500 23.900 10 24.400 9.700 25.800 C9.300 27.500 10.800 29 12.900 28.800 C15.100 28.600 16.600 26.800 16.300 24.400 C18.400 27 17 31.400 13 32 C8.600 32.600 5 29.200 4.800 25.200 C4.750 23.800 5.200 22.500 6.200 21.600 Z" fill="#ff7a20"/>
  <path d="M5 26 C5.600 29.600 9 32.400 13 32 C17 31.400 18.400 27 16.300 24.400 C16.600 27.400 14.600 29.600 12 29.800 C9 30 6.200 28.600 5 26 Z" fill="#f03c50" opacity="0.85"/>
  <!-- thunderbird -->
  <circle cx="12.300" cy="48" r="9.400" fill="url(#gTb)"/>
  <path d="M5.400 42 C8 38.400 15 37.800 19 41.600 C21.400 44 22 48 21 51.400 C19.600 47 16 43.400 11 43.200 C9 43.100 7 43.400 5.400 44.400 Z" fill="#3a9af4" opacity="0.900"/>
  <path d="M18 42.500 C20.400 45.500 20.600 51 18.400 54.400" fill="none" stroke="#5ab0f6" stroke-width="0.900" opacity="0.700"/>
  <path d="M4.800 44.400 L9 45.400 L15 44.800 L15.700 55 L9 53.600 L3.700 51 Z" fill="#ffffff"/>
  <path d="M5 45 L10.400 49 L15 45.400" fill="none" stroke="#d4daea" stroke-width="0.600"/>
  <path d="M3.700 51 L9 53.600 L15.700 55 C13 57.200 8 57 5 54 Z" fill="#16206e"/>

  <!-- files -->
  <rect x="3.8" y="63" width="17.3" height="17.2" rx="2" fill="#a9a08d"/>
  <rect x="4.6" y="63.8" width="15.7" height="15.6" rx="1.4" fill="none" stroke="#8f8775" stroke-width="0.6"/>
  <path d="M6.2 66.8 h4.2 l1 1 h6.8 v9.6 h-12 Z" fill="#fbfaf7"/>
  <rect x="6.2" y="67" width="4.6" height="1.2" fill="#e8e4da"/>

  <!-- rhythmbox -->
  <rect x="5.4" y="86.8" width="13.8" height="17" rx="1.6" fill="#ebe7dc"/>
  <circle cx="12.3" cy="95.4" r="5.6" fill="#20242c"/>
  <circle cx="12.3" cy="95.4" r="4.5" fill="#f6c91b"/>
  <circle cx="12.3" cy="95.4" r="2.4" fill="#252a36"/>
  <circle cx="12.3" cy="95.4" r="0.8" fill="#5a6078"/>

  <!-- writer -->
  <path d="M6.50 111.40 H13.50 L18.70 116.60 V126.50 a0.8 0.8 0 0 1 -0.8 0.8 H6.50 a0.8 0.8 0 0 1 -0.8 -0.8 V112.20 a0.8 0.8 0 0 1 0.8 -0.8 Z" fill="#fcfcfc" stroke="#1c9ad8" stroke-width="1.2" stroke-linejoin="round"/>
  <path d="M15.70 110.90 H18.40 a0.9 0.9 0 0 1 0.9 0.9 V114.60 Z" fill="#1a86c8"/>
  <rect x="7.600" y="116.800" width="3.600" height="0.800" fill="#2a9ada"/><rect x="7.600" y="118.300" width="3.600" height="0.800" fill="#2a9ada"/><rect x="7.600" y="119.800" width="3.600" height="0.800" fill="#2a9ada"/>
  <rect x="11.800" y="116.800" width="4.800" height="3.800" fill="#1b6fb5"/>
  <rect x="12.600" y="117.600" width="2.400" height="1.400" fill="#8ccaf0"/>
  <rect x="7.600" y="121.800" width="9" height="0.900" fill="#4aace2"/>
  <rect x="7.600" y="123.400" width="9" height="0.900" fill="#4aace2"/>
  <rect x="7.600" y="125" width="5.600" height="0.900" fill="#4aace2"/>

  <!-- ubuntu software -->
  <path d="M9.6 136.4 v-1.4 a2.7 2.2 0 0 1 5.4 0 v1.4" fill="none" stroke="#cfc3a6" stroke-width="0.8"/>
  <rect x="3.8" y="136" width="17.3" height="14.2" rx="1.4" fill="url(#gSw)"/>
  <path d="M8 148.4 L12.4 138.6 L16.8 148.4 M6.4 145.5 H18.400" fill="none" stroke="#ffffff" stroke-width="1.900" stroke-linejoin="round"/>

  <!-- help -->
  <circle cx="12.5" cy="166.8" r="8.5" fill="url(#gHelp)"/>
  <text x="12.5" y="171.6" font-family="Liberation Sans, sans-serif" font-size="13.500" fill="#ffffff" text-anchor="middle">?</text>

  <!-- separator -->
  <rect x="3" y="181.6" width="18.6" height="0.6" fill="#3a3a3a"/>

  <!-- trash -->
  <rect x="5.4" y="188.2" width="13.8" height="16.6" rx="1.6" fill="#d9d9d6"/>
  <rect x="5.4" y="188.2" width="13.8" height="16.6" rx="1.6" fill="none" stroke="#b2b2ae" stroke-width="0.5"/>
  <rect x="6.800" y="189.300" width="11" height="2.400" rx="0.500" fill="#828280"/>
  <g fill="none" stroke="#2a9a2a" stroke-width="1.450" stroke-linecap="round">
    <path d="M10.6 196.6 L12.3 194.4 L14 196.6"/>
    <path d="M15 198.2 L15.6 200.6 L13.2 200.9"/>
    <path d="M11.4 200.9 L9 200.6 L9.7 198.2"/>
  </g>

  <!-- show apps -->
  <rect x="0.9" y="425.5" width="23.1" height="24" rx="1.5" fill="#444444"/>
  <g fill="#ffffff">
    <rect x="6.5" y="431.8" width="2.3" height="2.3" rx="0.6"/><rect x="11.1" y="431.8" width="2.3" height="2.3" rx="0.6"/><rect x="15.7" y="431.8" width="2.3" height="2.3" rx="0.6"/>
    <rect x="6.5" y="436.4" width="2.3" height="2.3" rx="0.6"/><rect x="11.1" y="436.4" width="2.3" height="2.3" rx="0.6"/><rect x="15.7" y="436.4" width="2.3" height="2.3" rx="0.6"/>
    <rect x="6.5" y="441" width="2.3" height="2.3" rx="0.6"/><rect x="11.1" y="441" width="2.3" height="2.3" rx="0.6"/><rect x="15.7" y="441" width="2.3" height="2.3" rx="0.6"/>
  </g>

  <!-- menu arrow -->
  <path d="M30.6 91.6 L26.4 95.4 L30.6 99.2 Z" fill="#262626" stroke="#383838" stroke-width="0.7"/>
  <rect x="30.4" y="92.3" width="1.2" height="6.2" fill="#262626"/>

  <!-- search icon -->
  <circle cx="331.2" cy="25.2" r="2" fill="none" stroke="#bcbcbc" stroke-width="0.8"/>
  <path d="M332.7 26.8 L334.1 28.3" stroke="#bcbcbc" stroke-width="0.9" stroke-linecap="round"/>

  <!-- bell -->
  <path d="M424.2 6.5 h3.8 l-0.6 -0.8 v-2 a1.3 1.3 0 0 0 -2.6 0 v2 Z" fill="none" stroke="#dddddd" stroke-width="0.7" stroke-linejoin="round"/>
  <rect x="425.5" y="7" width="1.2" height="0.7" fill="#dddddd"/>

  <!-- network -->
  <g fill="#e6e6e6">
    <rect x="707.8" y="2" width="2.2" height="2.2"/>
    <rect x="705.8" y="5.6" width="2.2" height="2.2"/>
    <rect x="709.8" y="5.6" width="2.2" height="2.2"/>
    <path d="M708.9 4 L706.9 6 M708.9 4 L710.9 6" stroke="#e6e6e6" stroke-width="0.7"/>
  </g>
  <!-- volume -->
  <path d="M716.8 4 h1.4 l2 -1.8 v5.8 l-2 -1.8 h-1.4 Z" fill="#e6e6e6"/>
  <path d="M721.2 3.4 a2.3 2.3 0 0 1 0 3.4" fill="none" stroke="#e6e6e6" stroke-width="0.6"/>
  <path d="M722.2 2.4 a3.6 3.6 0 0 1 0 5.4" fill="none" stroke="#8a8a8a" stroke-width="0.6"/>
  <!-- battery -->
  <rect x="729.4" y="2.2" width="3.6" height="6" rx="0.4" fill="#e6e6e6"/>
  <rect x="730.4" y="1.6" width="1.6" height="0.8" fill="#e6e6e6"/>
  <path d="M727.6 4.2 l1.2 0 0 -0.8 M727.6 4.2 l1.2 1.4" stroke="#9a9a9a" stroke-width="0.5" fill="none"/>

  <!-- page dots -->
  <circle cx="382.2" cy="443.2" r="2.1" fill="#ffffff"/>
  <circle cx="395.2" cy="443.2" r="1.3" fill="#9a9a9a"/>
</svg>

</body>
</html>
